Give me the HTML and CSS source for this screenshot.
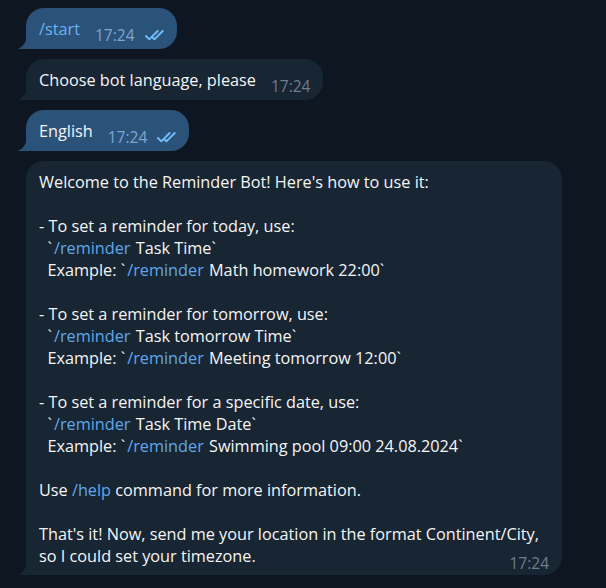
FILE: index.html
```html
<!DOCTYPE html>
<html lang="en">
<head>
<meta charset="utf-8">
<title>Reminder Bot chat</title>
<link rel="stylesheet" href="styles.css">
</head>
<body>
<div class="chat">
  <div class="bubble out">
    <span class="text link">/start</span>
    <span class="meta"><span class="time">17:24</span><svg class="checks" viewBox="0 0 22 11" width="22" height="11"><path d="M1 6 L4.3 9.3 L12.6 1 M9.4 9.3 L17.7 1 M7.6 7.5 L9.4 9.3"/></svg></span>
    <svg class="tail" viewBox="0 0 9 15" width="9" height="15"><path d="M9 0 C9 7 6 12 0 15 L9 15 Z"/></svg>
  </div>
  <div class="bubble in">
    <span class="text">Choose bot language, please</span>
    <span class="meta"><span class="time">17:24</span></span>
    <svg class="tail" viewBox="0 0 9 15" width="9" height="15"><path d="M9 0 C9 7 6 12 0 15 L9 15 Z"/></svg>
  </div>
  <div class="bubble out">
    <span class="text">English</span>
    <span class="meta"><span class="time">17:24</span><svg class="checks" viewBox="0 0 22 11" width="22" height="11"><path d="M1 6 L4.3 9.3 L12.6 1 M9.4 9.3 L17.7 1 M7.6 7.5 L9.4 9.3"/></svg></span>
    <svg class="tail" viewBox="0 0 9 15" width="9" height="15"><path d="M9 0 C9 7 6 12 0 15 L9 15 Z"/></svg>
  </div>
  <div class="bubble in long">
    <div class="text">Welcome to the Reminder Bot! Here's how to use it:

- To set a reminder for today, use:
  `<span class="link cmd">/reminder</span> Task Time`
  Example: `<span class="link cmd">/reminder</span> Math homework 22:00`

- To set a reminder for tomorrow, use:
  `<span class="link cmd">/reminder</span> Task tomorrow Time`
  Example: `<span class="link cmd">/reminder</span> Meeting tomorrow 12:00`

- To set a reminder for a specific date, use:
  `<span class="link cmd">/reminder</span> Task Time Date`
  Example: `<span class="link cmd">/reminder</span> Swimming pool 09:00 24.08.2024`

Use <span class="link">/help</span> command for more information.

That's it! Now, send me your location in the format Continent/City,
so I could set your timezone.</div>
    <span class="meta"><span class="time">17:24</span></span>
    <svg class="tail" viewBox="0 0 9 15" width="9" height="15"><path d="M9 0 C9 7 6 12 0 15 L9 15 Z"/></svg>
  </div>
</div>
</body>
</html>
```

FILE: styles.css
```css
html, body {
  margin: 0;
  padding: 0;
  background: #0e1621;
  height: 100%;
}

body {
  font-family: "Open Sans", "Noto Sans", sans-serif;
  font-size: 16.25px;
  line-height: 22px;
  color: #f5f5f5;
}

.chat {
  display: flex;
  flex-direction: column;
  align-items: flex-start;
  gap: 10px;
  padding: 8px 0 0 26px;
}

.bubble {
  position: relative;
  display: flex;
  align-items: flex-end;
  padding: 10px 13px 9px 13px;
  border-radius: 18px 18px 18px 0;
}

.bubble.out {
  background: #2b5278;
  padding-right: 10px;
}

.bubble.in {
  background: #182533;
}

.tail {
  position: absolute;
  left: -8px;
  bottom: 0;
  display: block;
}

.out .tail path { fill: #2b5278; }
.in .tail path { fill: #182533; }

.text {
  white-space: pre-wrap;
}

.link {
  color: #6ab3f3;
}

.in .link {
  color: #5fa8ea;
}

.in .cmd {
  margin-left: 2px;
  margin-right: 1px;
}

.meta {
  display: flex;
  align-items: center;
  margin-left: 15px;
  margin-bottom: -3px;
  font-size: 15.5px;
  line-height: 16px;
  white-space: nowrap;
}

.out .time { color: #7da8d3; }
.in .time { color: #6d7f8f; }

.checks {
  margin-left: 10px;
  display: block;
}

.checks path {
  fill: none;
  stroke: #72bcfd;
  stroke-width: 1.9;
  stroke-linecap: round;
  stroke-linejoin: round;
}

.bubble.long {
  display: grid;
  width: 536px;
  box-sizing: border-box;
  padding: 10px 13px 8px 13px;
}

.long .text,
.long .meta {
  grid-area: 1 / 1;
}

.long .meta {
  justify-self: end;
  align-self: end;
  margin-left: 0;
  margin-bottom: -4px;
}
```
